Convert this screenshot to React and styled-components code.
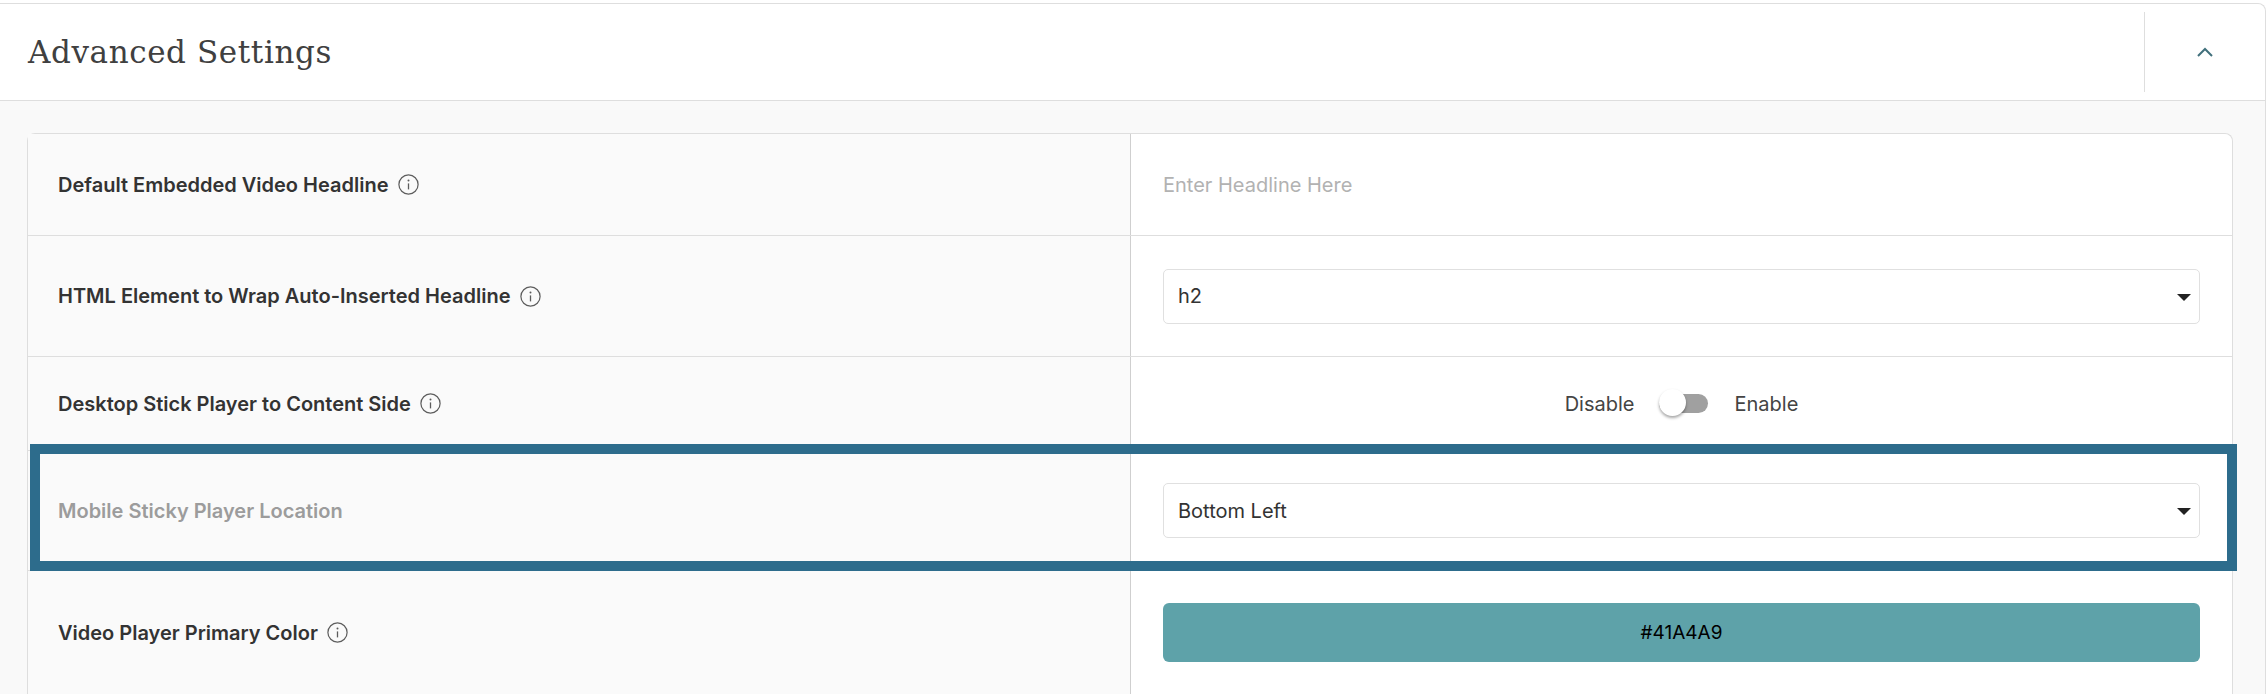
import React from "react";
import styled, { createGlobalStyle } from "styled-components";

const rows = [
  { label: "Default Embedded Video Headline", info: true, kind: "input", height: 102 },
  { label: "HTML Element to Wrap Auto-Inserted Headline", info: true, kind: "select", value: "h2", height: 121 },
  { label: "Desktop Stick Player to Content Side", info: true, kind: "toggle", height: 94 },
  { label: "Mobile Sticky Player Location", kind: "select", value: "Bottom Left", muted: true, marked: true, height: 120 },
  { label: "Video Player Primary Color", info: true, kind: "color", value: "#41A4A9", height: 124 },
];

const InfoIcon = () => (
  <InfoSvg viewBox="0 0 21 21" fill="none">
    <circle cx="10.5" cy="10.5" r="9.6" stroke="#5c5c5c" strokeWidth="1.2" />
    <circle cx="10.5" cy="6.6" r="1" fill="#5c5c5c" />
    <path d="M10.5 9.4v6" stroke="#5c5c5c" strokeWidth="1.3" />
  </InfoSvg>
);

const Control = ({ row }) => {
  if (row.kind === "input") return <HeadlineInput placeholder="Enter Headline Here" />;
  if (row.kind === "select") {
    return (
      <SelectWrap>
        <Select defaultValue={row.value}>
          <option>{row.value}</option>
        </Select>
      </SelectWrap>
    );
  }
  if (row.kind === "toggle") {
    return (
      <ToggleRow>
        <span>Disable</span>
        <Track>
          <Knob />
        </Track>
        <span>Enable</span>
      </ToggleRow>
    );
  }
  return <ColorButton>{row.value}</ColorButton>;
};

const App = () => {
  return (
    <>
      <GlobalStyle />
      <Card>
        <Header>
          <Title>Advanced Settings</Title>
          <CollapseButton>
            <svg width="16" height="10" viewBox="0 0 16 10" fill="none">
              <path d="M1 9l7-7 7 7" stroke="#41707c" strokeWidth="2" />
            </svg>
          </CollapseButton>
        </Header>
        <Body>
          <Table>
            {rows.map((row) => (
              <Row key={row.label} $height={row.height}>
                <LabelCell $muted={row.muted}>
                  {row.label}
                  {row.info && <InfoIcon />}
                </LabelCell>
                <ControlCell>
                  <Control row={row} />
                </ControlCell>
                {row.marked && <Highlight />}
              </Row>
            ))}
          </Table>
        </Body>
      </Card>
    </>
  );
};

export default App;

const GlobalStyle = createGlobalStyle`
  html, body {
    margin: 0;
    height: 694px;
    overflow: hidden;
    background: #fff;
    font-family: "Inter", "Open Sans", Arial, sans-serif;
    color: #333;
  }
  * {
    box-sizing: border-box;
  }
`;

const Card = styled.section`
  margin: 3px 2px 0 -8px;
  border: 1px solid #dedede;
  border-bottom: none;
  border-radius: 8px 8px 0 0;
  background: #f9f9f9;
`;

const Header = styled.header`
  display: flex;
  justify-content: space-between;
  align-items: center;
  height: 97px;
  padding-left: 35px;
  background: #fff;
  border-bottom: 1px solid #dedede;
  border-radius: 8px 8px 0 0;
`;

const Title = styled.h1`
  margin: 0;
  font-family: "DejaVu Serif", serif;
  font-size: 31px;
  font-weight: 400;
  letter-spacing: 0.6px;
  color: #404040;
`;

const CollapseButton = styled.div`
  display: flex;
  align-items: center;
  justify-content: center;
  width: 121px;
  height: 80px;
  border-left: 1px solid #dedede;
`;

const Body = styled.div`
  padding: 32px 32px 0 34px;
`;

const Table = styled.div`
  border: 1px solid #dedede;
  border-bottom: none;
  border-radius: 8px 8px 0 0;
  overflow: visible;
`;

const Row = styled.div`
  position: relative;
  display: grid;
  grid-template-columns: 1102px 1fr;
  height: ${(p) => p.$height}px;
  border-bottom: 1px solid #dedede;

  &:first-child > div:last-of-type {
    border-top-right-radius: 8px;
  }
`;

const LabelCell = styled.div`
  display: flex;
  align-items: center;
  gap: 9px;
  padding-left: 30px;
  font-size: 20px;
  font-weight: 600;
  color: ${(p) => (p.$muted ? "#9c9c9c" : "#333")};
  background: #fafafa;
`;

const ControlCell = styled.div`
  display: flex;
  align-items: center;
  padding: 0 32px;
  background: #fff;
  border-left: 1px solid #cfcfcf;
`;

const InfoSvg = styled.svg`
  width: 21px;
  height: 21px;
  flex: none;
`;

const HeadlineInput = styled.input`
  width: 100%;
  padding: 0;
  border: none;
  outline: none;
  background: transparent;
  font: 400 20px "Inter", sans-serif;
  color: #333;

  &::placeholder {
    color: #b2b2b2;
    opacity: 1;
  }
`;

const SelectWrap = styled.div`
  position: relative;
  width: 100%;

  &::after {
    content: "";
    position: absolute;
    top: 25px;
    right: 9px;
    border-left: 7px solid transparent;
    border-right: 7px solid transparent;
    border-top: 7px solid #222;
  }
`;

const Select = styled.select`
  display: block;
  width: 100%;
  height: 55px;
  padding: 0 14px;
  appearance: none;
  background: #fff;
  border: 1px solid #e0e0e0;
  border-radius: 5px;
  font: 400 20px "Inter", sans-serif;
  color: #333;
`;

const ToggleRow = styled.div`
  display: flex;
  align-items: center;
  justify-content: center;
  gap: 24px;
  width: 100%;
  font-size: 20px;
  color: #444;
`;

const Track = styled.div`
  position: relative;
  width: 49px;
  height: 19px;
  margin-right: 3px;
  border-radius: 10px;
  background: #a0a0a0;
`;

const Knob = styled.div`
  position: absolute;
  top: -5px;
  left: 0;
  width: 27px;
  height: 27px;
  border-radius: 50%;
  background: #fff;
  box-shadow: 0 2px 3px rgba(0, 0, 0, 0.35);
`;

const ColorButton = styled.div`
  display: flex;
  align-items: center;
  justify-content: center;
  width: 100%;
  height: 59px;
  border-radius: 6px;
  background: #5ea2a9;
  font-size: 19px;
  color: #000;
`;

const Highlight = styled.div`
  position: absolute;
  top: -7px;
  left: 2px;
  right: -5px;
  bottom: -1px;
  border: 10px solid #2d6c8c;
  pointer-events: none;
`;
